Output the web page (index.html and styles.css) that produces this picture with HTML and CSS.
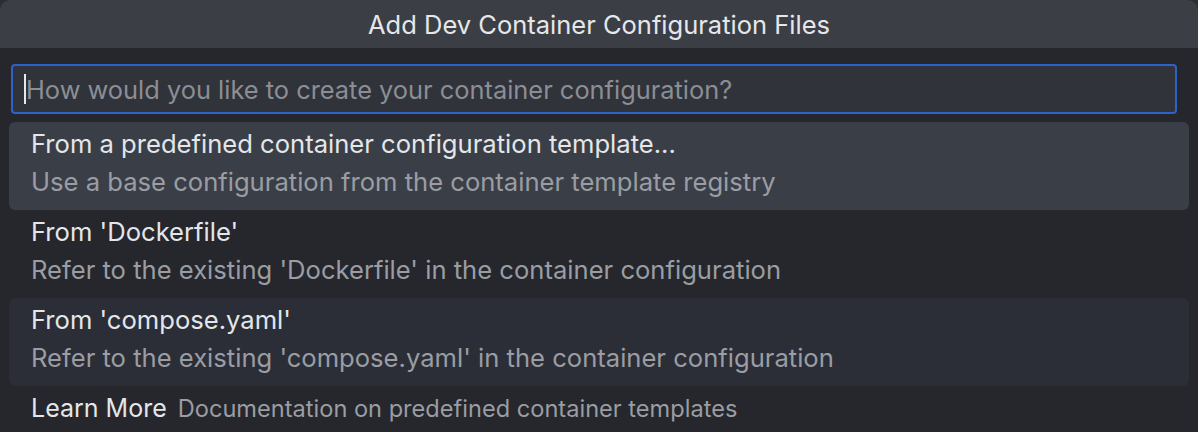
FILE: index.html
```html
<!DOCTYPE html>
<html>
<head>
<meta charset="utf-8">
<link rel="stylesheet" href="styles.css">
</head>
<body>
<div class="picker">
  <div class="titlebar">Add Dev Container Configuration Files</div>
  <div class="content">
    <div class="input">
      <span class="caret"></span>
      <span class="placeholder">How would you like to create your container configuration?</span>
    </div>
    <div class="list">
      <div class="item selected">
        <div class="label">From a predefined container configuration template...</div>
        <div class="desc">Use a base configuration from the container template registry</div>
      </div>
      <div class="item">
        <div class="label">From 'Dockerfile'</div>
        <div class="desc">Refer to the existing 'Dockerfile' in the container configuration</div>
      </div>
      <div class="item hover">
        <div class="label">From 'compose.yaml'</div>
        <div class="desc">Refer to the existing 'compose.yaml' in the container configuration</div>
      </div>
      <div class="item inline">
        <span class="label">Learn More</span>
        <span class="small">Documentation on predefined container templates</span>
      </div>
    </div>
  </div>
</div>
</body>
</html>
```
FILE: styles.css
```css
html, body {
  margin: 0;
  padding: 0;
  background: #2c2e32;
  width: 1198px;
  height: 432px;
  overflow: hidden;
  font-family: Inter, "Noto Sans", sans-serif;
}
.picker {
  width: 1198px;
  height: 432px;
  border-radius: 10px 10px 0 0;
  overflow: hidden;
  background: #25272c;
  display: flex;
  flex-direction: column;
}
.titlebar {
  height: 48px;
  flex: none;
  background: #3b3e44;
  color: #e6e7ea;
  font-size: 25.5px;
  display: flex;
  align-items: center;
  justify-content: center;
}
.content {
  padding: 16px 9px 0 9px;
  display: flex;
  flex-direction: column;
}
.input {
  margin: 0 12px 0 2px;
  height: 46px;
  border: 2px solid #2e62c8;
  border-radius: 4px;
  background: #30333a;
  display: flex;
  align-items: center;
  padding-left: 11px;
}
.caret {
  width: 2px;
  height: 30px;
  background: #e8e8e8;
}
.placeholder {
  color: #8b8e94;
  font-size: 25.4px;
}
.list {
  margin-top: 8px;
  display: flex;
  flex-direction: column;
}
.item {
  height: 88px;
  box-sizing: border-box;
  border-radius: 6px;
  padding: 7px 0 0 22px;
  display: flex;
  flex-direction: column;
  justify-content: flex-start;
  gap: 8px;
}
.item.selected { background: #3a3f47; }
.item.hover { background: #2b2e36; }
.label {
  color: #e4e6ea;
  font-size: 25.6px;
  line-height: 30px;
}
.desc {
  color: #9a9da3;
  font-size: 25.6px;
  line-height: 30px;
}
.item.inline {
  flex-direction: row;
  align-items: baseline;
  gap: 11px;
}
.item.inline .label {
  font-size: 25px;
}
.small {
  color: #9a9da3;
  font-size: 23.6px;
  line-height: 30px;
}
```
